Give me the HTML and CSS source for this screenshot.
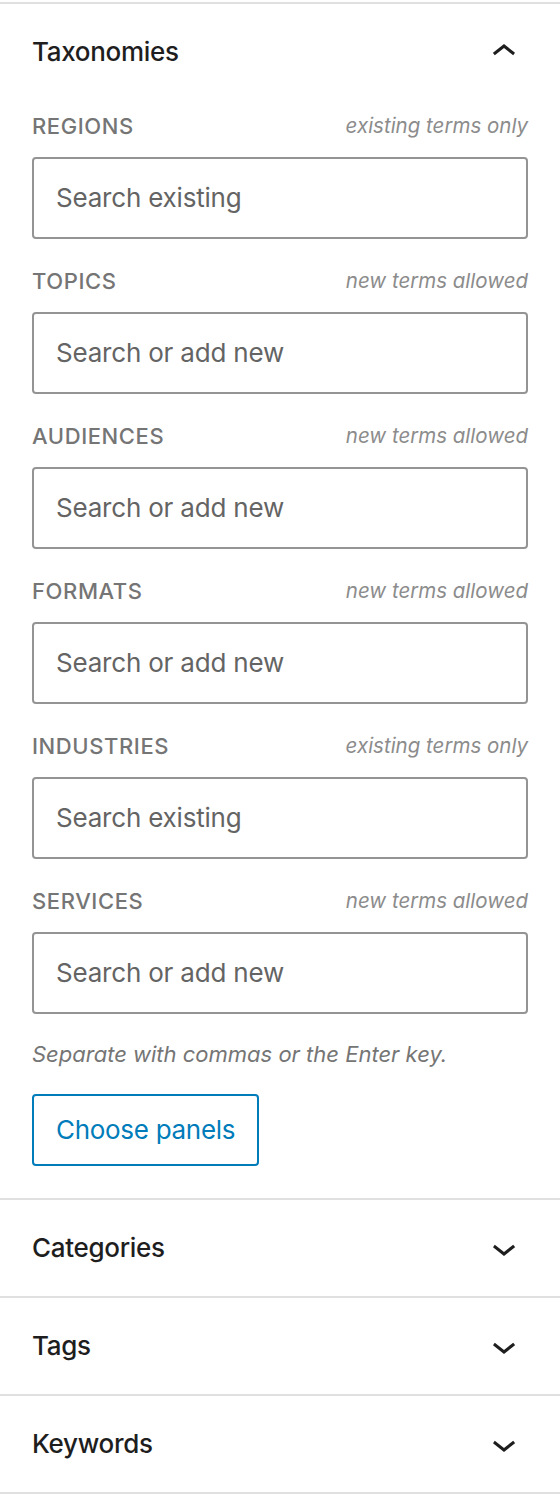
FILE: index.html
```html
<!DOCTYPE html>
<html lang="en">
<head>
<meta charset="utf-8">
<title>Taxonomies</title>
<link rel="stylesheet" href="styles.css">
</head>
<body>
<div class="sidebar">
  <section class="panel panel-open">
    <div class="panel-header">
      <span class="panel-title">Taxonomies</span>
      <svg class="chev" viewBox="0 0 24 24" width="48" height="48" aria-hidden="true"><path d="M6.5 12.4L12 8l5.5 4.4-.9 1.2L12 10l-4.6 3.6-1-1.2z"/></svg>
    </div>
    <div class="panel-body">
      <div class="tax-group">
        <div class="tax-label-row"><span class="tax-label">Regions</span><span class="tax-note">existing terms only</span></div>
        <div class="tax-field"><span class="placeholder">Search existing</span></div>
      </div>
      <div class="tax-group">
        <div class="tax-label-row"><span class="tax-label">Topics</span><span class="tax-note">new terms allowed</span></div>
        <div class="tax-field"><span class="placeholder">Search or add new</span></div>
      </div>
      <div class="tax-group">
        <div class="tax-label-row"><span class="tax-label">Audiences</span><span class="tax-note">new terms allowed</span></div>
        <div class="tax-field"><span class="placeholder">Search or add new</span></div>
      </div>
      <div class="tax-group">
        <div class="tax-label-row"><span class="tax-label">Formats</span><span class="tax-note">new terms allowed</span></div>
        <div class="tax-field"><span class="placeholder">Search or add new</span></div>
      </div>
      <div class="tax-group">
        <div class="tax-label-row"><span class="tax-label">Industries</span><span class="tax-note">existing terms only</span></div>
        <div class="tax-field"><span class="placeholder">Search existing</span></div>
      </div>
      <div class="tax-group">
        <div class="tax-label-row"><span class="tax-label">Services</span><span class="tax-note">new terms allowed</span></div>
        <div class="tax-field"><span class="placeholder">Search or add new</span></div>
      </div>
      <p class="help">Separate with commas or the Enter key.</p>
      <button class="btn-secondary" type="button">Choose panels</button>
    </div>
  </section>
  <section class="panel">
    <div class="panel-header">
      <span class="panel-title">Categories</span>
      <svg class="chev" viewBox="0 0 24 24" width="48" height="48" aria-hidden="true"><path d="M17.5 11.6L12 16l-5.5-4.4.9-1.2L12 14l4.6-3.6 1 1.2z"/></svg>
    </div>
  </section>
  <section class="panel">
    <div class="panel-header">
      <span class="panel-title">Tags</span>
      <svg class="chev" viewBox="0 0 24 24" width="48" height="48" aria-hidden="true"><path d="M17.5 11.6L12 16l-5.5-4.4.9-1.2L12 14l4.6-3.6 1 1.2z"/></svg>
    </div>
  </section>
  <section class="panel panel-last">
    <div class="panel-header">
      <span class="panel-title">Keywords</span>
      <svg class="chev" viewBox="0 0 24 24" width="48" height="48" aria-hidden="true"><path d="M17.5 11.6L12 16l-5.5-4.4.9-1.2L12 14l4.6-3.6 1 1.2z"/></svg>
    </div>
  </section>
</div>
</body>
</html>
```

FILE: styles.css
```css
html, body {
  margin: 0;
  padding: 0;
  background: #ffffff;
}

body {
  font-family: Inter, "Noto Sans", "Liberation Sans", sans-serif;
  color: #1e1e1e;
  -webkit-font-smoothing: antialiased;
}

.sidebar {
  width: 560px;
  padding-top: 2px;
}

.panel {
  border-top: 2px solid #e0e0e0;
}

.panel-last {
  border-bottom: 2px solid #e0e0e0;
}

.panel-header {
  height: 96px;
  padding: 0 32px;
  display: flex;
  align-items: center;
  justify-content: space-between;
  box-sizing: border-box;
}

.panel-title {
  font-size: 26px;
  font-weight: 500;
  line-height: 32px;
  letter-spacing: -0.3px;
  color: #1e1e1e;
}

.chev {
  width: 48px;
  height: 48px;
  fill: #1e1e1e;
  flex: none;
}

.panel-body {
  padding: 10px 32px 32px;
}

.tax-group {
  margin-bottom: 26px;
}

.tax-group:last-of-type {
  margin-bottom: 0;
}

.tax-label-row {
  display: flex;
  justify-content: space-between;
  align-items: center;
  height: 32px;
  margin-bottom: 15px;
}

.tax-label {
  font-size: 22px;
  font-weight: 500;
  text-transform: uppercase;
  letter-spacing: 0.6px;
  color: #757575;
  line-height: 32px;
}

.tax-note {
  font-size: 20.5px;
  font-style: italic;
  color: #8c8c8c;
  line-height: 32px;
}

.tax-field {
  height: 82px;
  box-sizing: border-box;
  border: 2px solid #949494;
  border-radius: 4px;
  padding: 0 22px;
  display: flex;
  align-items: center;
}

.placeholder {
  font-size: 26px;
  color: #646464;
  line-height: 32px;
  letter-spacing: -0.2px;
}

.help {
  margin: 24px 0 24px;
  font-size: 22px;
  font-style: italic;
  line-height: 32px;
  color: #757575;
}

.btn-secondary {
  display: block;
  height: 72px;
  padding: 0 22px;
  border: 2px solid #007cba;
  border-radius: 4px;
  background: #ffffff;
  color: #007cba;
  font-family: Inter, "Noto Sans", "Liberation Sans", sans-serif;
  font-size: 26px;
  font-weight: 400;
  line-height: 32px;
  letter-spacing: -0.3px;
  cursor: pointer;
}
```
